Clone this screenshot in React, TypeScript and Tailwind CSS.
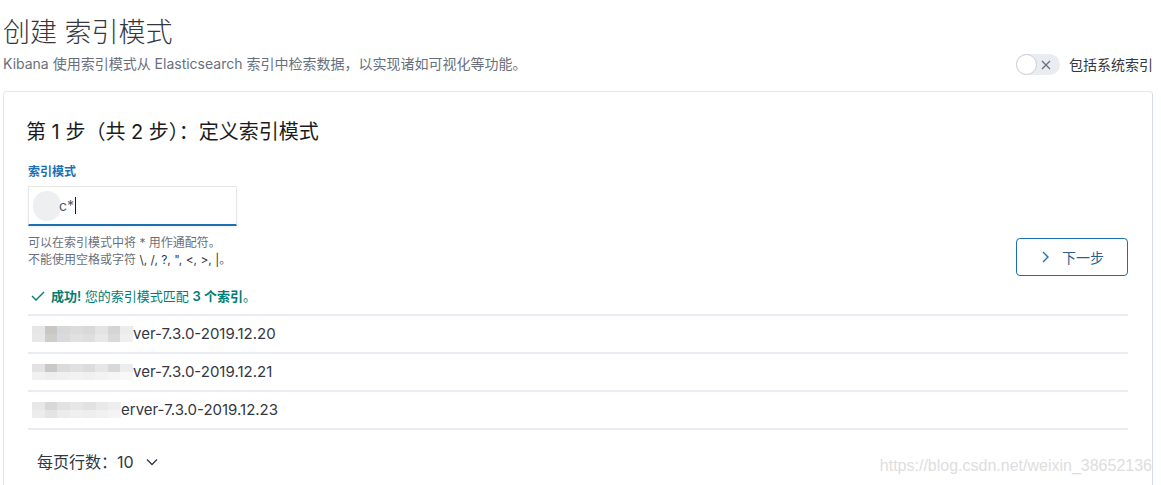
import React from "react";

const font = { fontFamily: 'Inter, "Noto Sans CJK SC", sans-serif' };

function Mosaic({ cells, width }: { cells: string[][]; width: number }) {
  return (
    <div className="flex flex-col" style={{ width }}>
      {cells.map((row, i) => (
        <div key={i} className="flex">
          {row.map((c, j) => (
            <div key={j} className="h-[8px] flex-1" style={{ backgroundColor: c }} />
          ))}
        </div>
      ))}
    </div>
  );
}

const rows = [
  {
    text: "ver-7.3.0-2019.12.20",
    w: 101,
    cells: [
      ["#e6e6e6", "#c9c7c4", "#d6d8da", "#dcdcdc", "#d9d9d9", "#e3e3e3", "#d4d5d6", "#ececec"],
      ["#e8e8e8", "#cfcdca", "#d9dadb", "#e1e1e1", "#dedede", "#e8e8e8", "#d9dadb", "#f0f0f0"],
    ],
  },
  {
    text: "ver-7.3.0-2019.12.21",
    w: 101,
    cells: [
      ["#e3e3e3", "#cac8c5", "#dadbdc", "#e0e0e0", "#dcdcdc", "#e6e6e6", "#d7d8d9", "#ededed"],
      ["#f1f1f1", "#eeeeee", "#f0f0f0", "#f2f2f2", "#f0f0f0", "#f3f3f3", "#f5f5f5", "#f8f8f8"],
    ],
  },
  {
    text: "erver-7.3.0-2019.12.23",
    w: 89,
    cells: [
      ["#e8e8e8", "#d8d8d8", "#e2e2e2", "#e7e7e7", "#e2e2e2", "#e9e9e9", "#eeeeee"],
      ["#ececec", "#e4e4e4", "#ececec", "#f0f0f0", "#eeeeee", "#f1f1f1", "#f4f4f4"],
    ],
  },
];

export default function App() {
  return (
    <div className="relative w-[1161px] h-[485px] overflow-hidden bg-white text-[#343741]" style={font}>
      {/* Header */}
      <div className="pl-[3px] pr-[8px] pt-[15px]">
        <h1 className="text-[27px] leading-[36px] font-light text-[#343741]">创建 索引模式</h1>
        <div className="flex items-center justify-between mt-[1px]">
          <p className="text-[14px] leading-[20px] text-[#69707d]">
            Kibana 使用索引模式从 Elasticsearch 索引中检索数据，以实现诸如可视化等功能。
          </p>
          <div className="flex items-center gap-[9px] mt-[2px]">
            <div className="relative w-[44px] h-[21px] rounded-full bg-[#e9ecf1] flex items-center">
              <div className="absolute left-0 top-0 w-[21px] h-[21px] rounded-full bg-white border border-[#c9ced6]" />
              <svg className="absolute right-[8px]" width="12" height="12" viewBox="0 0 12 12">
                <path d="M2 2 L10 10 M10 2 L2 10" stroke="#69707d" strokeWidth="1.3" fill="none" />
              </svg>
            </div>
            <span className="text-[14px] leading-[20px] text-[#343741]">包括系统索引</span>
          </div>
        </div>
      </div>

      {/* Panel */}
      <div className="ml-[3px] mt-[16px] w-[1150px] h-[420px] rounded-[4px] border border-[#e3e6ec] border-r-[#d3daea] px-[24px] pt-[26px]">
        <h2 className="text-[20px] leading-[28px] text-[#1a1c21] -ml-[2px]">第 1 步（共 2 步）：定义索引模式</h2>

        <div className="flex items-start justify-between mt-[18px]">
          <div>
            <div className="text-[12px] leading-[16px] font-semibold text-[#1a6fb5]">索引模式</div>
            <div className="mt-[6px] w-[209px] h-[40px] bg-white border-t border-x border-[#e6e6e6] border-b-2 border-b-[#1a6fb5] shadow-[0_2px_3px_rgba(0,0,0,0.05)] flex items-center pl-[4px]">
              <div className="w-[28px] h-[30px] rounded-full bg-[#eeeff0]" />
              <span className="text-[14px] text-[#535966] -ml-[2px]">c*</span>
              <span className="w-[1px] h-[17px] bg-[#1a1c21] ml-[1px]" />
            </div>
            <div className="mt-[8px] text-[12px] leading-[17px] text-[#69707d]">
              <div>可以在索引模式中将 * 用作通配符。</div>
              <div>
                不能使用空格或字符 <span className="text-[#343741]">\, /, ?, ", &lt;, &gt;, |</span>。
              </div>
            </div>
          </div>
          <button className="mt-[74px] w-[112px] h-[38px] rounded-[4px] border border-[#1a6fb5] flex items-center justify-center gap-[12px] text-[#1a6fb5] text-[14px]">
            <svg width="10" height="14" viewBox="0 0 10 14">
              <path d="M3 2 L8 7 L3 12" stroke="#1a6fb5" strokeWidth="1.4" fill="none" />
            </svg>
            <span className="text-[#2a5f8f]">下一步</span>
          </button>
        </div>

        <div className="mt-[11px] flex items-center gap-[6px] text-[13px] leading-[18px] text-[#017d73] pl-[3px]">
          <svg width="14" height="12" viewBox="0 0 14 12">
            <path d="M1 6 L5 10 L13 2" stroke="#017d73" strokeWidth="1.4" fill="none" />
          </svg>
          <span>
            <b className="font-semibold">成功!</b> 您的索引模式匹配 <b className="font-semibold">3 个索引</b>。
          </span>
        </div>

        <div className="mt-[9px] border-t-2 border-[#e9ecf2]">
          {rows.map((r, i) => (
            <div key={i} className="h-[38px] border-b-2 border-[#e9ecf2] flex items-center pl-[4px]">
              <Mosaic cells={r.cells} width={r.w} />
              <span className="text-[15px] text-[#343741]">{r.text}</span>
            </div>
          ))}
        </div>

        <div className="mt-[20px] pl-[9px] flex items-center gap-[11px] text-[16px] text-[#343741]">
          <span>每页行数：10</span>
          <svg width="14" height="10" viewBox="0 0 14 10">
            <path d="M2 2.5 L7 7.5 L12 2.5" stroke="#343741" strokeWidth="1.3" fill="none" />
          </svg>
        </div>
      </div>

      <div
        className="absolute right-[9px] bottom-[9px] text-[16px] leading-[20px] text-[#dedede]"
        style={{ fontFamily: '"Liberation Sans", Arial, sans-serif' }}
      >
        https://blog.csdn.net/weixin_38652136
      </div>
    </div>
  );
}
